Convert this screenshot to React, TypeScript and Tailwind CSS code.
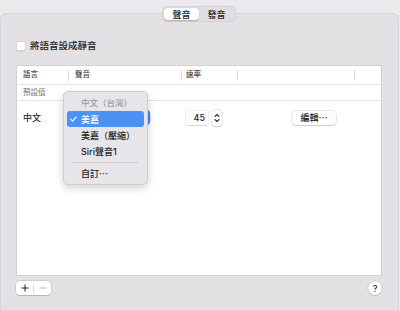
import React from "react";

const font = { fontFamily: "Inter, 'Noto Sans CJK TC', 'Noto Sans', sans-serif" };

function Chevrons({ color = "#333" }: { color?: string }) {
  return (
    <svg width="6" height="10" viewBox="0 0 6 10" fill="none">
      <path d="M1 3.5 L3 1.5 L5 3.5" stroke={color} strokeWidth="1.1" strokeLinecap="round" strokeLinejoin="round" />
      <path d="M1 6.5 L3 8.5 L5 6.5" stroke={color} strokeWidth="1.1" strokeLinecap="round" strokeLinejoin="round" />
    </svg>
  );
}

function HeaderCell({ label, divider, textMl }: { label?: string; divider: boolean; textMl: string }) {
  return (
    <div className="flex items-center h-full">
      {divider && <div className="w-px h-[11px] bg-[#dcdcdc]" />}
      {label && <span className={`${textMl} text-[7.5px] font-medium text-[#444] leading-none`}>{label}</span>}
    </div>
  );
}

export default function App() {
  return (
    <div className="w-[400px] h-[310px] bg-[#ebe9ec] overflow-hidden pt-[13px]" style={font}>
      <div className="w-[399px] h-[320px] border border-[#d6d4d8] rounded-[6px] bg-[#e3e1e4] flex flex-col">
        {/* segmented control */}
        <div className="flex justify-center -mt-[8px] pr-[1px]">
          <div className="flex h-[16px] rounded-[5px] border border-[#d3d1d5] bg-[#e0dee2] p-px">
            <div className="w-[35px] h-full rounded-[4px] bg-white shadow-[0_0.5px_1px_rgba(0,0,0,0.2)] flex items-center justify-center text-[9px] font-medium text-[#222] leading-none">
              聲音
            </div>
            <div className="w-[35px] h-full flex items-center justify-center text-[9px] font-medium text-[#222] leading-none">
              發音
            </div>
          </div>
        </div>

        {/* checkbox */}
        <div className="flex items-center gap-[4px] ml-[15px] mt-[19px]">
          <div className="w-[10px] h-[10px] rounded-[2.5px] bg-white border border-[#d4d2d6] shadow-[0_0.5px_0.5px_rgba(0,0,0,0.1)]" />
          <span className="text-[9.5px] font-medium text-[#222] leading-none">將語音設成靜音</span>
        </div>

        {/* table */}
        <div className="relative ml-[15px] mt-[14px] w-[366px] h-[211px] bg-white border border-[#d2d0d4]">
          <div className="grid grid-cols-[51px_113px_56px_117px_1fr] h-[19px] border-b border-[#e4e4e4]">
            <HeaderCell label="語言" divider={false} textMl="ml-[6px]" />
            <HeaderCell label="聲音" divider={true} textMl="ml-[6px]" />
            <HeaderCell label="速率" divider={true} textMl="ml-[4px]" />
            <HeaderCell divider={true} textMl="" />
            <HeaderCell divider={true} textMl="" />
          </div>
          <div className="h-[16px] border-b border-[#e4e4e4] flex items-center pl-[6px]">
            <span className="text-[7.5px] font-medium text-[#8a8a8a] leading-none">預設值</span>
          </div>
          <div className="grid grid-cols-[51px_113px_56px_117px_1fr] h-[33px] items-center">
            <span className="pl-[6px] text-[9px] font-medium text-[#1d1d1d] leading-none">中文</span>
            <div className="flex items-center pl-[2px]">
              <div className="flex items-center w-[80px] h-[15px] rounded-[4px] bg-white shadow-[0_0_0_0.5px_rgba(0,0,0,0.2),0_1px_1px_rgba(0,0,0,0.1)] overflow-hidden">
                <div className="flex-1" />
                <div className="w-[14px] h-full bg-[#3f86f4] flex items-center justify-center">
                  <Chevrons color="#fff" />
                </div>
              </div>
            </div>
            <div className="flex items-center pl-[5px] gap-[4px]">
              <div className="w-[22px] h-[14px] bg-white shadow-[0_0_0_0.5px_rgba(0,0,0,0.12),0_0.5px_1px_rgba(0,0,0,0.1)] flex items-center justify-end pr-[3px] text-[9px] font-medium text-[#222] leading-none">
                45
              </div>
              <div className="w-[10px] h-[16px] rounded-[3px] bg-white shadow-[0_0_0_0.5px_rgba(0,0,0,0.15),0_0.5px_1px_rgba(0,0,0,0.15)] flex items-center justify-center">
                <Chevrons />
              </div>
            </div>
            <div className="flex items-center pl-[55px]">
              <div className="w-[44px] h-[14px] rounded-[4px] bg-white shadow-[0_0_0_0.5px_rgba(0,0,0,0.18),0_1px_1px_rgba(0,0,0,0.12)] flex items-center justify-center text-[9px] font-medium text-[#222] leading-none">
                編輯⋯
              </div>
            </div>
            <div />
          </div>

          {/* popup menu */}
          <div className="absolute left-[46px] top-[25px] w-[85px] h-[94px] rounded-[5px] bg-[#e7e5e9] border border-[#cfcdd1] shadow-[0_3px_8px_rgba(0,0,0,0.18)] pt-[3px] flex flex-col">
            <div className="h-[16px] flex items-center pl-[17px] text-[8.5px] font-medium text-[#9b9a9c] leading-none">中文（台灣）</div>
            <div className="h-[16px] mx-[3px] rounded-[3px] bg-[#4b91f6] flex items-center text-[9px] font-medium text-white leading-none">
              <svg width="7" height="6" viewBox="0 0 7 6" className="ml-[3px] mr-[4px]" fill="none">
                <path d="M0.7 3.2 L2.6 5.1 L6.3 0.8" stroke="#fff" strokeWidth="1.1" strokeLinecap="round" strokeLinejoin="round" />
              </svg>
              美嘉
            </div>
            <div className="h-[16px] flex items-center pl-[17px] text-[9px] font-medium text-[#222] leading-none">美嘉（壓縮）</div>
            <div className="h-[16px] flex items-center pl-[17px] text-[9px] font-medium text-[#222] leading-none">Siri聲音1</div>
            <div className="h-[6px] flex items-center mx-[9px]">
              <div className="w-full h-px bg-[#cfcdd1]" />
            </div>
            <div className="h-[16px] flex items-center pl-[17px] text-[9px] font-medium text-[#222] leading-none">自訂⋯</div>
          </div>
        </div>

        {/* bottom controls */}
        <div className="flex items-center justify-between ml-[15px] w-[366px] mt-[5px]">
          <div className="flex items-center h-[14px] w-[35px] rounded-[4px] bg-white shadow-[0_0_0_0.5px_rgba(0,0,0,0.15),0_0.5px_1px_rgba(0,0,0,0.15)]">
            <div className="w-[17px] flex items-center justify-center">
              <svg width="8" height="8" viewBox="0 0 8 8"><path d="M4 0.5 V7.5 M0.5 4 H7.5" stroke="#222" strokeWidth="1" /></svg>
            </div>
            <div className="w-px h-[9px] bg-[#dddddd]" />
            <div className="flex-1 flex items-center justify-center">
              <svg width="8" height="8" viewBox="0 0 8 8"><path d="M0.5 4 H7.5" stroke="#bdbdbd" strokeWidth="1" /></svg>
            </div>
          </div>
          <div className="w-[14px] h-[14px] rounded-full bg-white shadow-[0_0_0_0.5px_rgba(0,0,0,0.15),0_0.5px_1px_rgba(0,0,0,0.2)] flex items-center justify-center text-[9px] text-[#222] leading-none font-medium">
            ?
          </div>
        </div>
      </div>
    </div>
  );
}
